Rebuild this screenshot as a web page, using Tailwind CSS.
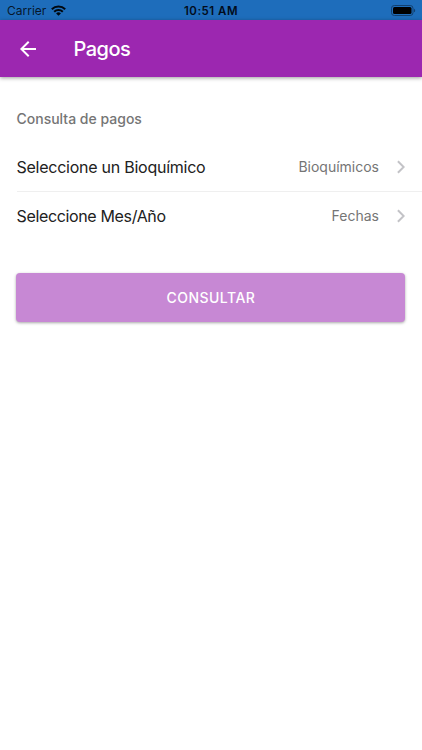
<!DOCTYPE html>
<html lang="es">
<head>
<meta charset="utf-8">
<meta name="viewport" content="width=device-width, initial-scale=1">
<title>Pagos</title>
<script src="https://cdn.jsdelivr.net/npm/@tailwindcss/browser@4"></script>
</head>
<body class="h-[750px] overflow-hidden bg-white font-['Inter','Roboto',sans-serif] text-[#212121]">
<div class="grid h-[20.4px] grid-cols-3 items-center bg-[#1e6dbb] pt-0.5 text-black/80">
  <div class="flex items-center gap-[5px] pl-[7px]">
    <span class="text-[12px] leading-4">Carrier</span>
    <svg class="-mt-0.5 h-[11px] w-[15px]" viewBox="0 0 15 11" fill="none" stroke="#000810" stroke-width="2">
      <path d="M.8 4.2a9.6 9.6 0 0 1 13.4 0M3.2 6.7a6.1 6.1 0 0 1 8.6 0"/>
      <path d="M7.5 10.8 5.1 8.4a3.4 3.4 0 0 1 4.8 0z" fill="#000810" stroke="none"/>
    </svg>
  </div>
  <span class="text-center text-[11.5px] leading-4 font-semibold tracking-[0.5px] text-[#020c1c]">10:51 AM</span>
  <div class="flex justify-end pr-[6px]">
    <svg class="-mt-0.5 h-[11px] w-[25px]" viewBox="0 0 25 11">
      <rect x=".5" y=".5" width="21.5" height="10" rx="2.8" fill="none" stroke="#12406f"/>
      <rect x="2" y="2" width="18.5" height="7" rx="1.5" fill="#000"/>
      <path d="M23 3.7c1.6.4 1.6 3.2 0 3.6z" fill="#12406f"/>
    </svg>
  </div>
</div>
<header class="flex h-[57.1px] items-center bg-[#9c27b0] pl-4 text-white shadow-[0_1px_4px_rgba(0,0,0,0.4)]">
  <svg class="size-6" viewBox="0 0 24 24" fill="currentColor"><path d="M20 11H7.83l5.59-5.59L12 4l-8 8 8 8 1.41-1.41L7.83 13H20v-2z"/></svg>
  <h1 class="ml-[33.5px] text-[20px] leading-6 font-medium tracking-[-0.5px]">Pagos</h1>
</header>
<main>
  <h2 class="mt-[31.5px] pl-[16.5px] text-[14px] leading-5 font-medium text-[#757575]">Consulta de pagos</h2>
  <ul class="mt-[14px] pl-[16.5px]">
    <li class="flex h-[49px] items-center border-b border-[#efefef] pr-[17px]">
      <span class="grow text-[16px] tracking-[-0.25px]">Seleccione un Bioquímico</span>
      <span class="text-[14px] text-[#757575]">Bioquímicos</span>
      <svg class="ml-[18px] h-[14px] w-2" viewBox="0 0 8 14" fill="none" stroke="#c3c3c7" stroke-width="2"><path d="m.9 1.2 5.8 5.8-5.8 5.8"/></svg>
    </li>
    <li class="flex h-12 items-center pr-[17px]">
      <span class="grow text-[16px] tracking-[-0.35px]">Seleccione Mes/Año</span>
      <span class="text-[14px] text-[#757575]">Fechas</span>
      <svg class="ml-[18px] h-[14px] w-2" viewBox="0 0 8 14" fill="none" stroke="#c3c3c7" stroke-width="2"><path d="m.9 1.2 5.8 5.8-5.8 5.8"/></svg>
    </li>
  </ul>
  <button class="mx-[16.4px] mt-[33px] flex h-[49px] w-[389px] items-center justify-center rounded bg-[#c788d4] text-[14px] font-medium tracking-[0.5px] text-white shadow-[0_1px_3px_rgba(0,0,0,0.35)]">CONSULTAR</button>
</main>
</body>
</html>
